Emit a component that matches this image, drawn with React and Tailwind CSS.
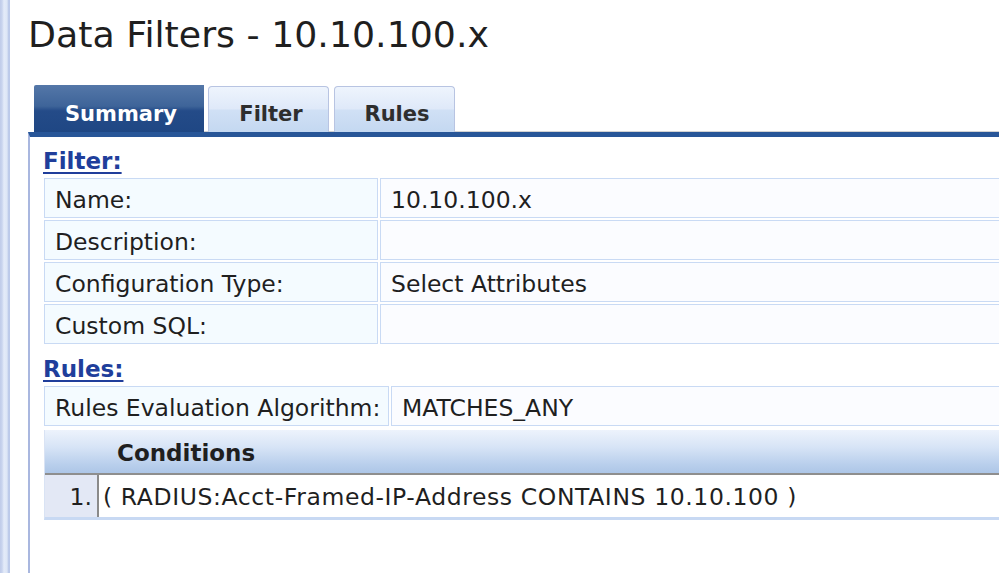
export default function App() {
  const labelCell =
    "h-[40px] border border-[#c9daf4] bg-[#f4fbff] pt-[8px] px-[10px] leading-[26px] whitespace-nowrap";
  const valueCell =
    "h-[40px] border border-[#c9daf4] bg-[#fbfcff] pt-[8px] px-[10px] leading-[26px] whitespace-nowrap";
  return (
    <div className="w-[999px] h-[573px] overflow-hidden bg-white flex font-['DejaVu_Sans',sans-serif] text-[#1f1f1f]">
      <div className="w-[10px] h-full shrink-0 bg-[linear-gradient(to_right,#bfcbe9_0px,#c9d4ee_2px,#e4ebf9_4px,#dde6f6_7px,#b3c2e6_9px,#c5d1ee_10px)]" />
      <div className="flex flex-col pl-[18px] w-[1200px] shrink-0">
        <div className="mt-[17px] h-[36px] text-[36.3px] leading-[36px] whitespace-nowrap">
          Data Filters - 10.10.100.x
        </div>
        <div className="mt-[32px] h-[47px] flex items-end">
          <div className="w-[6px] h-full" />
          <div className="w-[170px] h-[47px] shrink-0 rounded-tl-[2px] bg-[linear-gradient(to_bottom,#5477a8_0%,#3e6499_45%,#244b88_55%,#1f4784_100%)] text-white font-bold text-[21px] leading-[24px] pt-[17px] pl-[4px] text-center">
            Summary
          </div>
          <div className="w-[4px] h-full border-b border-[#d2d2d2]" />
          <div className="w-[121px] h-[46px] shrink-0 rounded-t-[4px] border border-b-0 border-[#b8c4e2] bg-[linear-gradient(to_bottom,#eef4fd_0%,#dfe9f9_48%,#d0e0f5_52%,#c4d8f1_100%)] text-[#2e2e2e] font-bold text-[21px] leading-[24px] pt-[15px] pl-[5px] text-center">
            Filter
          </div>
          <div className="w-[5px] h-full border-b border-[#d2d2d2]" />
          <div className="w-[121px] h-[46px] shrink-0 rounded-t-[4px] border border-b-0 border-[#b8c4e2] bg-[linear-gradient(to_bottom,#eef4fd_0%,#dfe9f9_48%,#d0e0f5_52%,#c4d8f1_100%)] text-[#2e2e2e] font-bold text-[21px] leading-[24px] pt-[15px] pl-[5px] text-center">
            Rules
          </div>
          <div className="flex-1 h-full border-b border-[#d2d2d2]" />
        </div>
        <div className="flex-1 border-t-[5px] border-t-[#285698] border-l-2 border-l-[#a9b7df] pt-[11px] pl-[13px] text-[23.5px]">
          <div className="h-[26px] text-[23px] leading-[26px] font-bold text-[#203e9b] underline decoration-2 underline-offset-[3px]">
            Filter:
          </div>
          <div className="mt-[4px] ml-[1px] grid grid-cols-[334px_1fr] gap-x-[2px] gap-y-[2px]">
            <div className={labelCell}>Name:</div>
            <div className={valueCell}>10.10.100.x</div>
            <div className={labelCell}>Description:</div>
            <div className={valueCell}></div>
            <div className={labelCell}>Configuration Type:</div>
            <div className={valueCell}>Select Attributes</div>
            <div className={labelCell}>Custom SQL:</div>
            <div className={valueCell}></div>
          </div>
          <div className="mt-[12px] h-[26px] text-[23px] leading-[26px] font-bold text-[#203e9b] underline decoration-2 underline-offset-[3px]">
            Rules:
          </div>
          <div className="mt-[4px] ml-[1px] grid grid-cols-[345px_1fr] gap-x-[2px]">
            <div className={labelCell}>Rules Evaluation Algorithm:</div>
            <div className={valueCell}>MATCHES_ANY</div>
          </div>
          <div className="mt-[4px] ml-[1px] border-l border-l-[#d9e3f4] border-b-[3px] border-b-[#c8d9f3]">
            <div className="h-[45px] pt-[10px] pl-[72px] bg-[linear-gradient(to_bottom,#edf3fc_0%,#d7e4f6_40%,#b9cfec_80%,#adc6e7_100%)] border-b-2 border-b-[#8e8e8e] font-bold text-[23px] leading-[26px]">
              Conditions
            </div>
            <div className="h-[42px] flex">
              <div className="w-[52px] h-full bg-[#e3e8f5] text-right pr-[5px] pt-[9px] leading-[26px]">
                1.
              </div>
              <div className="flex-1 h-full border-l-2 border-l-[#8a8a8a] bg-white pl-[4px] pt-[9px] leading-[26px] tracking-[0.6px] whitespace-nowrap">
                ( RADIUS:Acct-Framed-IP-Address CONTAINS 10.10.100 )
              </div>
            </div>
          </div>
        </div>
      </div>
    </div>
  );
}
